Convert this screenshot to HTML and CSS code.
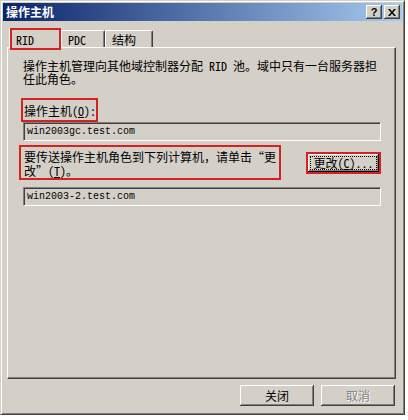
FILE: index.html
```html
<!DOCTYPE html>
<html lang="zh-CN">
<head>
    <meta charset="UTF-8">
    <title>操作主机</title>
    <link rel="stylesheet" href="styles.css">
</head>
<body>
    <div class="window">
        <div class="titlebar">
            <span class="title">操作主机</span>
            <div class="title-btns">
                <span class="tbtn help">?</span>
                <span class="tbtn close">
                    <svg width="8" height="7" viewBox="0 0 8 7">
                        <path d="M0 0h2l2 2.5L6 0h2L5 3.5 8 7H6L4 4.5 2 7H0l3-3.5z" fill="#000"/>
                    </svg>
                </span>
            </div>
        </div>

        <div class="content">
            <div class="tabs">
                <div class="tab active">RID</div>
                <div class="tab">PDC</div>
                <div class="tab">结构</div>
            </div>

            <div class="panel">
                <p class="desc">操作主机管理向其他域控制器分配 RID 池。域中只有一台服务器担<br>任此角色。</p>

                <div class="mark label">操作主机(<u>O</u>):</div>
                <div class="field">win2003gc.test.com</div>

                <div class="transfer">
                    <div class="mark note">要传送操作主机角色到下列计算机，请单击“更<br>改”(<u>T</u>)。</div>
                    <div class="mark btn-mark">
                        <button class="btn focus"><span>更改(<u>C</u>)...</span></button>
                    </div>
                </div>
                <div class="field">win2003-2.test.com</div>
            </div>

            <div class="actions">
                <button class="btn">关闭</button>
                <button class="btn disabled">取消</button>
            </div>
        </div>
    </div>
</body>
</html>
```

FILE: styles.css
```css
body {
    margin: 0;
    background: #ffffff;
    font-family: "Noto Sans Mono CJK SC", "Noto Sans CJK SC", sans-serif;
    font-size: 12px;
    color: #000;
}

.window {
    width: 405px;
    height: 415px;
    box-sizing: border-box;
    background: #d4d0c8;
    border: 1px solid;
    border-color: #d4d0c8 #404040 #404040 #d4d0c8;
    box-shadow: inset 1px 1px #ffffff, inset -1px -1px #808080;
    padding: 2px;
}

/* Title bar */
.titlebar {
    height: 18px;
    display: flex;
    align-items: center;
    justify-content: space-between;
    background: linear-gradient(to right, #0a246a, #a6caf0);
    padding: 0 2px 0 3px;
}

.title {
    color: #fff;
    font-weight: bold;
    font-size: 12px;
    font-family: "Noto Sans CJK SC", sans-serif;
    line-height: 18px;
}

.title-btns {
    display: flex;
    gap: 2px;
}

.tbtn {
    width: 16px;
    height: 14px;
    box-sizing: border-box;
    background: #d4d0c8;
    box-shadow: inset -1px -1px #404040, inset 1px 1px #ffffff, inset -2px -2px #808080;
    display: flex;
    align-items: center;
    justify-content: center;
}

.help {
    font-family: "Liberation Sans", sans-serif;
    font-weight: bold;
    font-size: 11px;
    line-height: 14px;
}

/* Tabs */
.content {
    padding: 7px 6px 0 4px;
}

.tabs {
    display: flex;
    align-items: flex-end;
    padding-left: 2px;
    height: 19px;
}

.tab {
    height: 17px;
    box-sizing: border-box;
    padding: 2px 6px 0;
    line-height: 14px;
    border-top: 1px solid #fff;
    border-left: 1px solid #fff;
    border-right: 1px solid #404040;
    box-shadow: inset -1px 0 #808080;
    border-radius: 2px 2px 0 0;
}

.tab:nth-child(1) { width: 52px; }
.tab:nth-child(2) { width: 44px; }
.tab:nth-child(3) { width: 48px; }

.tab.active {
    height: 20px;
    margin-bottom: -1px;
    padding-top: 4px;
    background: #d4d0c8;
    position: relative;
    z-index: 1;
}

.tab.active::after {
    content: "";
    position: absolute;
    top: -1px;
    left: 0;
    right: -1px;
    bottom: -2px;
    border: 2px solid #d42222;
}

/* Panel */
.panel {
    height: 332px;
    box-sizing: border-box;
    border: 1px solid;
    border-color: #fff #404040 #404040 #fff;
    box-shadow: inset -1px -1px #808080;
    padding: 11px 14px 0 13px;
}

.desc {
    margin: 0 0 0 2px;
    line-height: 13px;
    white-space: nowrap;
}

.mark {
    border: 2px solid #d42222;
    box-sizing: border-box;
}

.label {
    display: inline-block;
    margin-top: 13px;
    padding: 4px 1px 3px;
    line-height: 13px;
    width: 77px;
    white-space: nowrap;
}

.field {
    height: 19px;
    box-sizing: border-box;
    margin-left: 2px;
    border: 1px solid;
    border-color: #808080 #fff #fff #808080;
    box-shadow: inset 1px 1px #404040;
    padding: 2px 3px;
    font-family: "Liberation Mono", monospace;
    font-size: 10px;
    line-height: 14px;
}

.transfer {
    display: flex;
    align-items: flex-start;
    justify-content: space-between;
    margin-top: 4px;
    margin-bottom: 7px;
}

.note {
    width: 262px;
    padding: 3px 3px 0;
    line-height: 14px;
    height: 35px;
    margin-left: -2px;
    white-space: nowrap;
}

.btn-mark {
    margin-top: 7px;
    padding: 0;
    height: 22px;
    width: 75px;
}

/* Buttons */
.btn {
    font-family: inherit;
    font-size: 12px;
    background: #d4d0c8;
    border: none;
    border-radius: 0;
    padding: 0;
    width: 74px;
    height: 21px;
    box-shadow: inset -1px -1px #404040, inset 1px 1px #ffffff, inset -2px -2px #808080;
    color: #000;
}

.btn.focus {
    width: 71px;
    height: 18px;
    display: flex;
    align-items: center;
    justify-content: center;
    box-shadow: inset -1px -1px #000, inset 1px 1px #ffffff, inset -2px -2px #808080;
}

.btn.focus span {
    border: 1px dotted #000;
    padding: 0 1px;
    line-height: 12px;
    width: 63px;
    white-space: nowrap;
}

.btn.disabled {
    color: #808080;
    text-shadow: 1px 1px #fff;
}

.actions {
    display: flex;
    justify-content: flex-end;
    gap: 7px;
    margin-top: 6px;
    padding-right: 1px;
}
```
